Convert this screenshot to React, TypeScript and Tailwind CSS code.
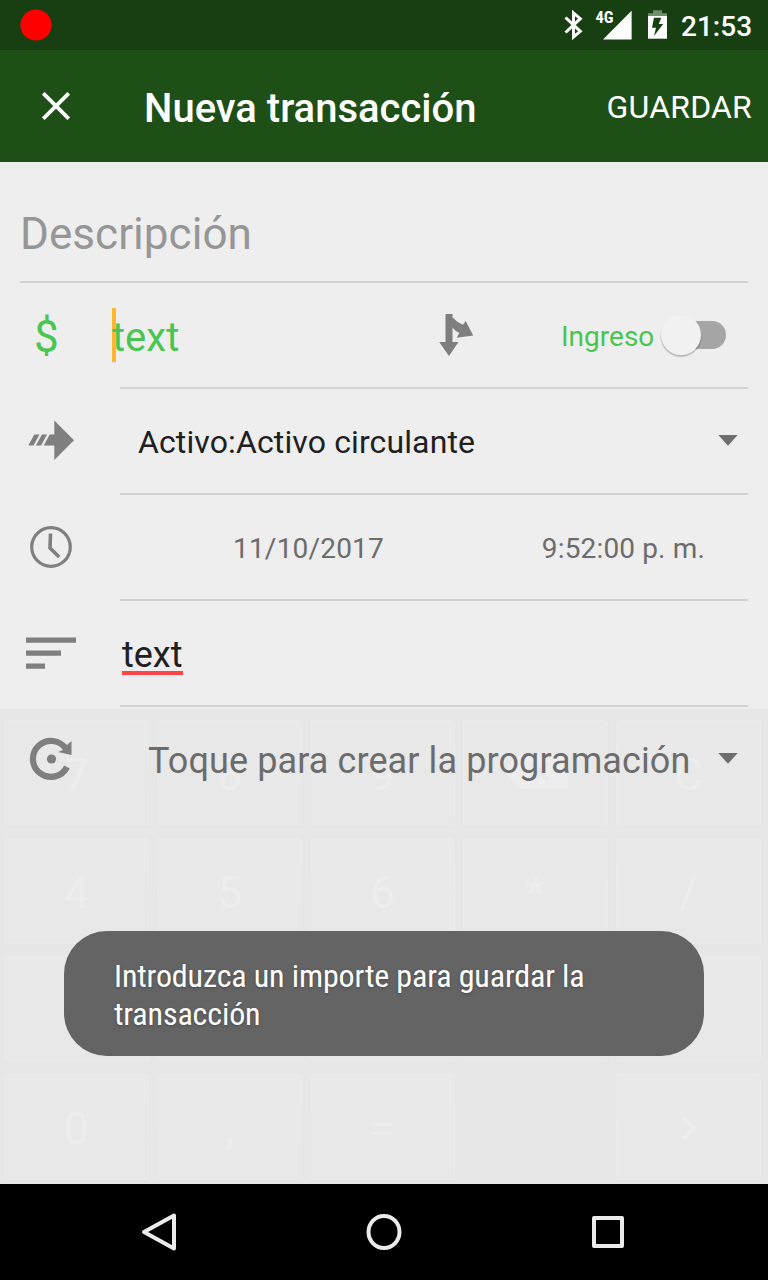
import type { ReactNode } from 'react';

const keys = ['7', '8', '9', 'back', 'C', '4', '5', '6', '*', '/', 'blank', 'blank', 'blank', 'blank', 'blank', '0', ',', '=', '', 'next'];

function Keypad() {
  return (
    <div className="absolute inset-x-0 top-[547px] grid h-[475px] grid-cols-[145px_145px_145px_145px_145px] grid-rows-[106px_106px_106px_106px] gap-x-2 gap-y-3 bg-[#e7e7e7] pt-[11px] pl-1 text-[44px] text-[#ededed]">
      {keys.map((key, i) =>
        key === '' ? (
          <div key={i} />
        ) : (
          <div key={i} className="flex flex-col items-center justify-center rounded-[3px] border border-t-2 border-[#eaeaea] bg-linear-to-b from-[#e9e9e9] to-[#e8e8e8] shadow-[0_1px_2px_#e4e4e4]">
            {key === 'back' ? (
              <svg width="64" height="36" viewBox="0 0 64 36" className="-mt-1">
                <path d="M0 17 17 0h47v35H17z" fill="#ededed" />
                <path d="m27 9 17 17m0-17L27 26" stroke="#e8e8e8" strokeWidth="4" />
              </svg>
            ) : key === 'next' ? (
              <svg width="16" height="24" viewBox="0 0 16 24" fill="none" stroke="#ededed" strokeWidth="4">
                <path d="m2 1 11 11L2 23" />
              </svg>
            ) : key === 'blank' ? null : (
              <span className="pt-0.5 leading-[50px]">{key}</span>
            )}
          </div>
        ),
      )}
    </div>
  );
}

function Row({ icon, last, children }: { icon: ReactNode; last?: boolean; children: ReactNode }) {
  return (
    <div className="flex h-[106px]">
      <div className="w-[120px] shrink-0">{icon}</div>
      <div className={last ? 'mr-5 flex flex-1' : 'mr-5 flex flex-1 border-b-2 border-[#d2d2d2]'}>{children}</div>
    </div>
  );
}

function Caret() {
  return (
    <svg width="20" height="11" viewBox="0 0 20 11">
      <path d="M.3 0h19.4L10 10.8z" fill="#6d6d6d" />
    </svg>
  );
}

export default function App() {
  return (
    <div className="relative flex h-[1280px] w-[768px] flex-col overflow-hidden bg-[#eeeeee] font-['Roboto',sans-serif] whitespace-nowrap">
      <div className="flex h-[50px] items-center bg-[#173f12] pr-4 pl-5 text-white">
        <svg width="32" height="32" viewBox="0 0 32 32">
          <circle cx="16" cy="16" r="15.6" fill="#f00" />
        </svg>
        <div className="flex-1" />
        <svg width="107" height="50" viewBox="0 0 107 50">
          <path d="M5.500 17.500 20.300 31.300 13.500 37V13l6.800 5.700L5.500 32.500" fill="none" stroke="#fff" strokeWidth="3" />
          <path d="M71.600 10.700v28.800H43z" fill="#fff" />
          <text x="35.500" y="23.300" fontSize="16" fontWeight="700" fill="#fff" className="[font-stretch:75%]" textLength="18" lengthAdjust="spacingAndGlyphs">4G</text>
          <path d="M93 10.300h9v3h5V17H88v-3.700h5z" fill="#738b70" />
          <path d="M88 16h19v22.700H88z" fill="#fff" />
          <path d="M94 17.700h7.300L98.700 24h4.500L94 36l2-8.300h-4z" fill="#173f12" />
        </svg>
        <span className="ml-[14px] w-[71px] pt-1 text-[28px] leading-8 font-medium">21:53</span>
      </div>

      <div className="flex h-28 items-center bg-[#1d4f17] pr-4 pl-[42px] text-white">
        <svg width="28" height="28" viewBox="0 0 28 28" className="shrink-0" stroke="#fff" strokeWidth="3.800">
          <path d="m1.300 1.300 25.400 25.400m0-25.400L1.300 26.700" />
        </svg>
        <span className="ml-[74px] pt-1.5 text-[40px] leading-[48px] font-medium">Nueva transacción</span>
        <span className="ml-auto pt-0.5 text-[32px] leading-10 tracking-[0.2px]">GUARDAR</span>
      </div>

      <div className="relative h-[1022px]">
        <Keypad />
        <div className="relative">
          <div className="mx-5 flex h-[121px] border-b-2 border-[#d2d2d2] pt-[46px] text-[44px] leading-[52px] tracking-[0.05px] text-[#969696]">
            Descripción
          </div>

          <Row
            icon={<div className="pt-7 pl-[34px] text-[44px] leading-[52px] text-[#4ac552]">$</div>}
          >
            <div className="-ml-2 flex w-[72px] pt-[25px]">
              <div className="h-[54px] w-1 bg-[#ffb62e]" />
              <span className="relative -ml-1 pt-[7px] text-[40px] leading-[46px] text-[#4ac552]">text</span>
            </div>
            <svg width="36" height="44" viewBox="0 0 36 44" className="mt-[30px] ml-[254px]" fill="#7e7e7e">
              <path d="M7.500 1h7v3.500q4.500 5 10.500 7.300L27.700 8 35.200 22.500 18.700 24.700 21.300 20q-4.300-2-6.800-5.500V29h6L11 43 1.200 29h6.300z" />
            </svg>
            <span className="mt-[38px] ml-[87px] text-[28px] leading-8 text-[#4ac552]">Ingreso</span>
            <svg width="76" height="52" viewBox="0 0 76 52" className="mt-[28px] mr-3 ml-auto">
              <rect x="20" y="10" width="46" height="28" rx="14" fill="#a5a5a5" />
              <circle cx="21" cy="26" r="20.600" fill="#000" opacity=".08" />
              <circle cx="21" cy="25.200" r="20.300" fill="#000" opacity=".15" />
              <circle cx="21" cy="24" r="20" fill="#f1f1f1" />
            </svg>
          </Row>

          <Row
            icon={
              <svg width="50" height="44" viewBox="0 0 50 44" className="mt-[30px] ml-7" fill="#7f7f7f">
                <path d="M26.300 1.500 46 21.200 26.300 41V26.500H15.700l6-11h4.600zM6.300 15.500h5.200l-6 11H.3zM13.900 15.500h5.200l-6 11H7.900z" />
              </svg>
            }
          >
            <span className="mt-[33px] ml-[18px] text-[32px] leading-[40px] tracking-[0.12px] text-[#202020]">Activo:Activo circulante</span>
            <div className="mt-[46px] mr-2.5 ml-auto"><Caret /></div>
          </Row>

          <Row
            icon={
              <svg width="44" height="44" viewBox="0 0 44 44" className="mt-[30px] ml-[29px]" fill="none" stroke="#7f7f7f">
                <circle cx="22" cy="22" r="19.300" strokeWidth="3.200" />
                <path d="M21.500 8.500 21 23l9.200 9" strokeWidth="3.600" strokeLinejoin="round" />
              </svg>
            }
          >
            <span className="mt-[38px] ml-[113px] text-[28px] leading-8 tracking-[0.2px] text-[#6c6c6c]">11/10/2017</span>
            <span className="mt-[38px] mr-[43px] ml-auto text-[28px] leading-8 tracking-[0.15px] text-[#6c6c6c]">9:52:00 p. m.</span>
          </Row>

          <Row
            icon={
              <svg width="52" height="34" viewBox="0 0 52 34" className="mt-[36px] ml-[25px]" fill="#7f7f7f">
                <path d="M1 .5h50v5.200H1zM1 13.500h35v5.200H1zM1 26.500h19v5.200H1z" />
              </svg>
            }
          >
            <span className="mt-[34px] ml-0.5 h-[40px] border-b-4 border-[#ff4545] text-[36px] leading-[40px] text-[#202020]">text</span>
          </Row>

          <Row
            last
            icon={
              <svg width="46" height="46" viewBox="0 0 46 46" className="mt-[29px] ml-[29px]" fill="none" stroke="#7f7f7f">
                <path d="M37 13A18 18 0 1 0 38 31" strokeWidth="6.200" />
                <path d="M42.500 5v14L29 16l5-2 5-6z" fill="#7f7f7f" stroke="none" />
                <circle cx="22.500" cy="23" r="4.600" fill="#7f7f7f" stroke="none" />
              </svg>
            }
          >
            <span className="mt-[33px] ml-7 text-[36px] leading-[42px] tracking-[0.1px] text-[#6c6c6c]">Toque para crear la programación</span>
            <div className="mt-[46px] mr-2.5 ml-auto"><Caret /></div>
          </Row>
        </div>
      </div>

      <div className="flex h-24 items-center bg-black">
        <svg width="768" height="96" viewBox="0 0 768 96" fill="none" stroke="#ebebeb" strokeWidth="4" strokeLinejoin="round">
          <path d="M174 31.500v33L144 48z" />
          <ellipse cx="384" cy="48" rx="15.500" ry="16" />
          <rect x="594" y="34" width="28" height="28" />
        </svg>
      </div>

      <div className="absolute top-[931px] left-16 h-[125px] w-[640px] rounded-[43px] bg-[#646464] pt-[26px] pl-[50px] text-white">
        <p className="text-[32px] leading-[38px] tracking-[-0.12px] [font-stretch:75%] [text-shadow:0_1px_3px_#2226]">
          Introduzca un importe para guardar la
          <br />
          transacción
        </p>
      </div>
    </div>
  );
}
